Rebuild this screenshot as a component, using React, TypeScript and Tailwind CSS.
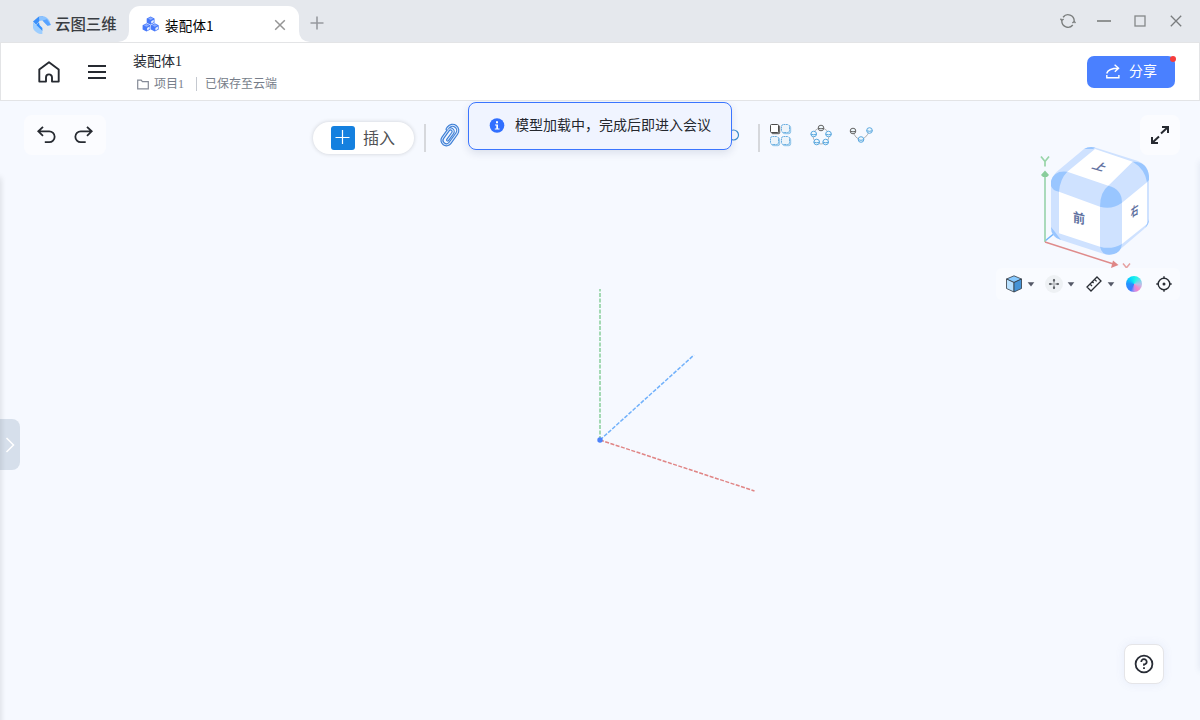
import React from 'react';

const ui = "font-['Liberation_Sans','Noto_Sans_CJK_SC',sans-serif]";
const mixed = "font-['Liberation_Serif','Noto_Sans_CJK_SC',serif]";

function BrandMark() {
  return (
    <svg width="18" height="18" viewBox="0 0 18 18" fill="none">
      <path d="M0 5.500 5.500.800 10.500.300 3.200 8.800Z" fill="#3a8ffa" />
      <path d="M6 .800Q13-1.500 16.500 5L17.800 9 14.500 9.800 9.400 4.500 6.300 5Z" fill="#8cc3ff" />
      <path d="M9.500 4.500 14 3.200 17.800 9 14.500 9.800Z" fill="#58a2ff" />
      <path d="M0 6 3.200 9 9.400 15V18A9 9 0 0 1 0 6Z" fill="#9dceff" />
      <path d="m3.200 9 2.800-2.800 .5 2.800 2.900 3v3Z" fill="#3390ff" />
    </svg>
  );
}

function Hex({ x, y }: { x: number; y: number }) {
  return (
    <g transform={`translate(${x} ${y})`}>
      <path d="M0-4.200 3.900-2.100v4.200L0 4.200-3.900 2.100v-4.200Z" fill="#4779fb" />
      <path d="M0-3.300 2.600-2 0-.7-2.600-2Z" fill="#8badff" />
      <path d="M.6.6 3.100-.8v2.400L.6 3Z" fill="#e8f0ff" />
    </g>
  );
}

function AssemblyIcon() {
  return (
    <svg width="18" height="16" viewBox="0 0 18 16">
      <Hex x={8.600} y={4.600} /><Hex x={4.500} y={11.400} /><Hex x={12.800} y={11.400} />
    </svg>
  );
}

function TitleBar() {
  return (
    <div className="flex h-[42px] bg-[#e5e8ed]">
      <div className="flex w-[129px] items-center gap-1 pl-[33px] pt-[8px]">
        <BrandMark />
        <span className={`${ui} whitespace-nowrap text-[15.4px] font-medium text-[#393d42]`}>云图三维</span>
      </div>
      <div className="relative mt-[6px] flex h-[36px] w-[170px] items-center rounded-t-[11px] bg-white pl-[13px] pr-[13px]">
        <svg className="absolute -left-[11px] bottom-0" width="11" height="11"><path d="M11 0v11H0Q11 10 11 0Z" fill="#fff" /></svg>
        <svg className="absolute -right-[11px] bottom-0" width="11" height="11"><path d="M0 0v11h11Q0 10 0 0Z" fill="#fff" /></svg>
        <AssemblyIcon />
        <span className="ml-[5px] flex-1 pt-[3px] font-['Noto_Sans_CJK_SC',sans-serif] text-[13.500px] tracking-[0.200px] text-black">装配体1</span>
        <svg className="mt-[2px]" width="12" height="12" stroke="#959595" strokeWidth="1.500"><path d="m1.200 1.200 9.600 9.600M10.800 1.200 1.200 10.800" /></svg>
      </div>
      <div className="flex flex-1 items-center pl-[11px] pt-[4px]">
        <svg width="14" height="14" stroke="#97999e" strokeWidth="1.600"><path d="M7 .5v13M.5 7h13" /></svg>
      </div>
      <div className="flex items-center pr-[18px] text-[#7b7e7e]">
        <svg width="16" height="16" viewBox="0 0 16 16" fill="none" stroke="currentColor" strokeWidth="1.400">
          <path d="M3.200 4A6.200 6.200 0 0 1 14.200 8v1.600M12.800 12A6.200 6.200 0 0 1 1.800 8V6.300M.5 5.700l1.300 1.800L3.600 6M12.400 10l1.800-1.600L15.500 10M4.500 3.200 3 4.300" />
        </svg>
        <svg className="ml-[21px]" width="14" height="2"><path d="M0 1h14" stroke="#86898a" strokeWidth="1.800" /></svg>
        <svg className="ml-[23px]" width="12" height="12" fill="none" stroke="#858889" strokeWidth="1.300"><rect x="1" y="1" width="10" height="10" /></svg>
        <svg className="ml-[24px]" width="12" height="12" stroke="#797c7e" strokeWidth="1.300"><path d="m.8.8 10.400 10.400M11.200.8.8 11.200" /></svg>
      </div>
    </div>
  );
}

function Header() {
  return (
    <div className="flex h-[59px] items-center border border-[#e3e4e6] bg-white pr-[24px]">
      <svg className="ml-[37px]" width="22" height="22" viewBox="0 0 22 22" fill="none" stroke="#262a31" strokeWidth="1.900" strokeLinejoin="round">
        <path d="M1.300 8.500 11 1.200 20.700 8.500v12.100H14v-4.200a3 3 0 0 0-6 0v4.200H1.300Z" />
      </svg>
      <div className="ml-[28px] flex w-[18px] flex-col gap-[4px]">
        <i className="h-[2px] bg-[#262a31]" /><i className="h-[2px] bg-[#262a31]" /><i className="h-[2px] bg-[#262a31]" />
      </div>
      <div className={`${mixed} ml-[27px] flex-1 pt-[2px]`}>
        <div className="text-[14px] leading-[20px] text-[#24282f]">装配体1</div>
        <div className="mt-[3px] flex h-[18px] items-center text-[12px] leading-[18px] text-[#777e8a]">
          <svg className="ml-[4px] mr-[5px]" width="12" height="11" viewBox="0 0 12 11" fill="none" stroke="#858b97" strokeWidth="1.200"><path d="M.7 1.200h3.500l1.200 1.500h5.900v7.100H.7Z" /></svg>
          <span>项目1</span>
          <i className="ml-[12px] mr-[8px] h-[14px] w-px bg-[#c5c9d0]" />
          <span>已保存至云端</span>
        </div>
      </div>
      <div className="relative flex h-[32px] w-[88px] items-center rounded-[7px] bg-[#4a80ff] pl-[19px] text-white">
        <svg width="14" height="15" viewBox="0 0 14 15" fill="none" stroke="currentColor" strokeWidth="1.400"><path d="M.7 9.500C1.500 6 5 4.200 12.500 4.200M8.600.7l4 3.500L8.800 7.800M.8 11v2.800h12.100V11" /></svg>
        <span className={`${ui} ml-[9px] text-[14px]`}>分享</span>
        <i className="absolute right-[-1px] top-0 h-[6px] w-[6px] rounded-full bg-[#f63c3c]" />
      </div>
    </div>
  );
}

function Ball({ x, y, c }: { x: number; y: number; c: string }) {
  return <g transform={`translate(${x} ${y})`} stroke={c} fill="#eff8fd" strokeWidth="1"><circle r="2.800" /><path d="M-3 .2Q0 1.400 3 .2" /></g>;
}

function PatternIcons() {
  return (
    <div className="flex gap-[16px]">
      <svg width="24" height="24" viewBox="0 0 24 24" fill="#edf4fa" stroke="#68ade0">
        <g fill="#b9dcf2" stroke="#8fc4e9"><rect x="13.700" y="2.700" width="8" height="8" rx="2" /><rect x="2.700" y="14.700" width="8" height="8" rx="2" /><rect x="13.700" y="14.700" width="8" height="8" rx="2" /></g>
        <g strokeDasharray="2 .5"><rect x="12.500" y="1.500" width="8" height="8" rx="2" /><rect x="1.500" y="13.500" width="8" height="8" rx="2" /><rect x="12.500" y="13.500" width="8" height="8" rx="2" /></g>
        <rect x="2.700" y="2.700" width="8" height="8" rx="1" fill="#888" stroke="#666" /><rect x="1.500" y="1.500" width="8" height="8" rx="1" fill="#fff" stroke="#4b4b4b" />
      </svg>
      <svg width="24" height="24" viewBox="0 0 24 24">
        <circle cx="12" cy="13" r="8" fill="none" stroke="#9a9a9a" strokeWidth=".7" />
        <Ball x={12} y={5} c="#656565" /><Ball x={4.700} y={11} c="#59a7df" /><Ball x={19.500} y={11} c="#59a7df" /><Ball x={7.700} y={19} c="#59a7df" /><Ball x={16.700} y={19} c="#59a7df" />
      </svg>
      <svg width="24" height="24" viewBox="0 0 24 24">
        <path d="M4 8q2 8 8 8.500q5-1 8.500-8.500" fill="none" stroke="#999" strokeWidth=".8" />
        <Ball x={4} y={8} c="#656565" /><Ball x={12} y={16.500} c="#59a7df" /><Ball x={20.500} y={7.500} c="#59a7df" />
      </svg>
    </div>
  );
}

function Toolbar() {
  return (
    <div className="flex h-[54px] px-[20px] pt-[14px]">
      <div className="ml-[4px] flex h-[40px] w-[82px] items-center justify-center gap-[18px] rounded-[8px] bg-[#fbfcff]">
        <svg width="20" height="20" viewBox="0 0 20 20" fill="none" stroke="#262a31" strokeWidth="1.800"><path d="M7 1.800 2.300 6.300 7 10.800M2.500 6.300h10.700a5.400 5.400 0 0 1 0 10.900H8.800" /></svg>
        <svg width="20" height="20" viewBox="0 0 20 20" fill="none" stroke="#262a31" strokeWidth="1.800"><path d="m13 1.800 4.700 4.500-4.700 4.500M17.500 6.300H6.800a5.400 5.400 0 0 0 0 10.900h4.900" /></svg>
      </div>
      <div className="ml-[207px] mt-[7px] flex h-[32px] w-[101px] items-center rounded-full bg-white pl-[18px] shadow-[0_0_4px_rgba(0,0,0,0.17)]">
        <span className="flex h-[24px] w-[24px] items-center justify-center rounded-[3px] bg-[#1480df]">
          <svg width="16" height="16" stroke="#fff" strokeWidth="1.200"><path d="M7.500 0v14M.500 7.500h14" /></svg>
        </span>
        <span className={`${ui} ml-[8px] pt-[2px] text-[16px] text-[#505154]`}>插入</span>
      </div>
      <i className="ml-[10px] mt-[9px] h-[28px] w-[2px] bg-[#d6d8dc]" />
      <svg className="ml-[13px] mt-[7px]" width="21" height="26" viewBox="0 0 21 26" fill="none" strokeLinecap="round">
        <g transform="translate(10.300 13) rotate(36)" strokeLinejoin="round">
          <path d="M-5.200-3.500V-5.500a5.200 5.200 0 0 1 10.400 0V6a4.400 4.400 0 0 1-8.800 0V-3.500a2.600 2.600 0 0 1 5.200 0V5" stroke="#3d7fd6" strokeWidth="3.300" />
          <path d="M-5.200-3.500V-5.500a5.200 5.200 0 0 1 10.400 0V6a4.400 4.400 0 0 1-8.800 0V-3.500a2.600 2.600 0 0 1 5.200 0V5" stroke="#dce9fb" strokeWidth="1" />
        </g>
      </svg>
      <svg className="ml-[269px] mt-[14px]" width="11" height="12" fill="none" stroke="#3b8dcc" strokeWidth="1.200"><circle cx="4.500" cy="6" r="5" /></svg>
      <i className="ml-[18px] mt-[9px] h-[28px] w-[2px] bg-[#d6d8dc]" />
      <div className="ml-[9px] mt-[8px]"><PatternIcons /></div>
      <div className="ml-auto flex h-[40px] w-[40px] items-center justify-center rounded-[8px] bg-[#fbfcff]">
        <svg width="20" height="20" viewBox="0 0 20 20" fill="none" stroke="#262a31" strokeWidth="2"><path d="M12 2h6v6M18 2l-7 6.500M8 18H2v-6M2 18l7-6.500" /></svg>
      </div>
    </div>
  );
}

function Toast() {
  return (
    <div className="absolute left-[468px] top-px z-10 flex h-[48px] w-[264px] items-center rounded-[8px] border border-[#3b75ff] bg-[#f0f4ff] pb-[2px] pl-[20px] shadow-[0_3px_9px_rgba(25,45,90,0.12)]">
      <svg width="16" height="15" viewBox="0 0 16 15"><circle cx="8" cy="7.500" r="7.300" fill="#316fff" /><path d="M7 3.300h2v2H7zM6 6.500h3v4h1.500v1H5.800v-1h1.500v-3H6z" fill="#fff" /></svg>
      <span className={`${ui} ml-[10px] whitespace-nowrap text-[14px] text-[#24272e]`}>模型加载中，完成后即进入会议</span>
    </div>
  );
}

function Axes() {
  return (
    <svg className="absolute left-[590px] top-[180px]" width="175" height="220" viewBox="590 281 175 220" strokeWidth="1.500" strokeDasharray="4 1.500">
      <path d="M600 440V289" stroke="#a3d9b3" strokeWidth="2" />
      <path d="M600 440 694 355" stroke="#71b1fb" />
      <path d="m600 440 154.500 51" stroke="#e08585" />
      <circle cx="600" cy="440" r="2.700" fill="#4d83fa" />
    </svg>
  );
}

function ViewCube() {
  return (
    <svg className="absolute left-[1035px] top-[39px]" width="120" height="128" viewBox="1035 140 120 128">
      <path d="M1045 241 1056 232" stroke="#73b5fc" strokeWidth="1.500" />
      <path d="M1084 149Q1089 146 1095 147.500L1138 161Q1148 165 1149 176V219Q1148.500 225 1144 229L1117 252Q1111 256 1104 254L1061 240Q1051 237 1051 228V182Q1052 175 1060 169Z" fill="#cfe2ff" />
      <path d="m1095 149 37.700 12.700-24.400 24-41-14ZM1059 191.700l41 15v40l-41-13.400ZM1122 202.700l25-20.400v41.700l-25 20Z" fill="#fff" />
      <g fill="#99c6ff">
        <path d="M1108.300 185.700Q1122 189 1122 202.700Q1112 210 1100 206.700Q1100 192 1108.300 185.700Z" />
        <path d="M1051 186V181Q1054 170 1067.300 171.700Q1060 179 1059 191.700Q1053 191 1051 186Z" />
        <path d="M1132.700 161.700Q1147 161 1149 176V180L1147 182.300Q1145 169 1132.700 161.700Z" />
        <path d="M1100 246.700Q1111 250 1122 244Q1121 252 1114 254Q1102 257 1100 246.700Z" />
        <path d="M1051 227 1055 232 1061 240Q1051 237 1051 227ZM1084 149Q1089 146 1095 147.500L1093 149ZM1147 224l2-5Q1149 225 1145 228Z" />
      </g>
      <g fill="#61719f" fontFamily="'Noto Sans CJK SC', sans-serif" fontWeight="700" textAnchor="middle">
        <text transform="matrix(.95 .28 -.72 .68 1099.500 167)" y="4" fontSize="12">上</text>
        <text transform="matrix(.92 .22 0 1 1079 218)" y="5" fontSize="13">前</text>
        <text transform="matrix(.62 -.4 0 1 1134.500 211)" y="4.500" fontSize="12.500">右</text>
      </g>
      <path d="M1045 242V174" stroke="#9cd5af" strokeWidth="1.700" />
      <path d="M1045 170.500 1049 175 1047 177h-4l-2-2Z" fill="#89cd9c" />
      <path d="m1045 242 70 22.500" stroke="#df8b8b" strokeWidth="1.500" />
      <path d="m1113 260.500 5.500 4.500-7.500 3Z" fill="#df8686" />
      <path d="M1041 156.500 1045 161.500 1049 156.500M1045 161.500V166.500" stroke="#98d5a8" strokeWidth="1.700" fill="none" />
      <path d="M1123 263.500 1130 272M1130 263.500 1123 272" stroke="#e6a1a1" strokeWidth="1.500" />
    </svg>
  );
}

function Caret() {
  return <svg width="8" height="5"><path d="M.7.300h6.600L4 4.500Z" fill="#555967" /></svg>;
}

function ViewTools() {
  return (
    <div className="relative ml-auto mr-[20px] mt-[113px] flex h-[32px] w-[184px] items-center rounded-[6px] bg-[#f9fbff] pl-[9px]">
      <svg width="18" height="18" viewBox="0 0 18 18" stroke="#333a42" strokeWidth=".8" strokeLinejoin="round"><path d="m9 .8 7.500 3.200L9 7.500 1.500 4Z" fill="#88caff" /><path d="M1.500 4 9 7.500V17l-7.500-3.500Z" fill="#b9e1ff" /><path d="M9 7.500 16.500 4v9.500L9 17Z" fill="#4593d6" /></svg>
      <span className="ml-[4px] flex"><Caret /></span>
      <span className="ml-[10px] flex h-[18px] w-[18px] items-center justify-center rounded-full bg-[#eef1f4]">
        <svg width="12" height="12" fill="#30343a" stroke="#30343a" strokeWidth="1"><path d="M6 1.500v3M6 7.500v3M1.500 6h3M7.500 6h3M5.500 6h1" /><path d="M4.700 2.500 6 .8l1.300 1.700ZM4.700 9.500 6 11.200l1.300-1.700ZM2.500 4.700.8 6l1.700 1.300ZM9.500 4.700 11.200 6 9.500 7.300Z" stroke="none" /></svg>
      </span>
      <span className="ml-[4px] flex"><Caret /></span>
      <svg className="ml-[11px]" width="16" height="16" viewBox="0 0 16 16" fill="none" stroke="#292d34" strokeWidth="1.300"><path d="M11 1 15 5 5 15 1 11ZM4 8l2 2M6.300 5.700l1.300 1.300M8.600 3.400l2 2" /></svg>
      <span className="ml-[5px] flex"><Caret /></span>
      <i className="ml-[11px] h-[16px] w-[16px] rounded-full bg-[conic-gradient(from_20deg,#24f5e8,#b9c0e9_20%,#fb83c8_35%,#bd91ec_44%,#3d7cff_52%,#2493ff_70%,#06dafa_85%,#24f5e8)]" />
      <svg className="ml-[14px]" width="16" height="16" viewBox="0 0 16 16" fill="none" stroke="#292d34" strokeWidth="1.400"><circle cx="8" cy="8" r="5.800" /><circle cx="8" cy="8" r="1.500" fill="#292d34" stroke="none" /><path d="M8 .3v2.500M8 13.200v2.500M.3 8h2.500M13.200 8h2.500" /></svg>
    </div>
  );
}

export default function App() {
  return (
    <div className="flex h-[720px] w-[1200px] flex-col overflow-hidden bg-[#e5e8ed]">
      <TitleBar />
      <Header />
      <main className="relative flex flex-1 flex-col overflow-hidden bg-[#f6f9ff]">
        <i className="absolute -left-[4px] top-[76px] h-[600px] w-[4px] rounded-full shadow-[0_0_6px_rgba(0,0,0,0.18)]" />
        <i className="absolute -right-[4px] top-[60px] h-[510px] w-[4px] rounded-full shadow-[0_0_6px_rgba(80,100,140,0.16)]" />
        <Axes />
        <ViewCube />
        <Toast />
        <Toolbar />
        <ViewTools />
        <button className="mt-[119px] flex h-[51px] w-[20px] items-center justify-center rounded-r-[8px] bg-[#d6dfeb]">
          <svg width="10" height="16" fill="none" stroke="#fff" strokeWidth="1.500"><path d="m1.500 1 7 7-7 7" /></svg>
        </button>
        <button className="ml-auto mr-[36px] mt-[174px] flex h-[40px] w-[40px] items-center justify-center rounded-[8px] border border-[#e5e5e8] bg-white shadow-[0_0_10px_rgba(100,120,200,0.10)]">
          <svg width="20" height="20" viewBox="0 0 20 20" fill="none" stroke="#282c35" strokeWidth="1.800"><circle cx="10" cy="10" r="8.400" /><path d="M7.300 8A2.700 2.700 0 1 1 10 10.500v1.300M10 13.300v1.700" /></svg>
        </button>
      </main>
    </div>
  );
}
